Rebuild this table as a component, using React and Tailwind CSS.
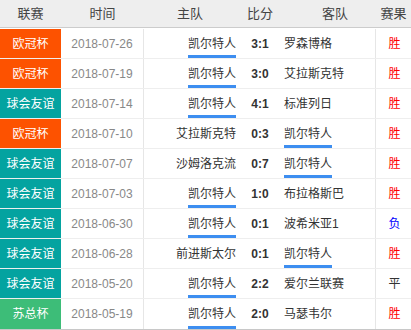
import React from 'react';

const leagueColors = {
  '欧冠杯': 'bg-[#fd5200]',
  '球会友谊': 'bg-[#04a3a0]',
  '苏总杯': 'bg-[#3dbd78]',
};

const resultColors = {
  '胜': 'text-[#ff0000]',
  '负': 'text-[#0000ff]',
  '平': 'text-[#333333]',
};

const matches = [
  { league: '欧冠杯', date: '2018-07-26', home: '凯尔特人', score: '3:1', away: '罗森博格', result: '胜' },
  { league: '欧冠杯', date: '2018-07-19', home: '凯尔特人', score: '3:0', away: '艾拉斯克特', result: '胜' },
  { league: '球会友谊', date: '2018-07-14', home: '凯尔特人', score: '4:1', away: '标准列日', result: '胜' },
  { league: '欧冠杯', date: '2018-07-10', home: '艾拉斯克特', score: '0:3', away: '凯尔特人', result: '胜' },
  { league: '球会友谊', date: '2018-07-07', home: '沙姆洛克流', score: '0:7', away: '凯尔特人', result: '胜' },
  { league: '球会友谊', date: '2018-07-03', home: '凯尔特人', score: '1:0', away: '布拉格斯巴', result: '胜' },
  { league: '球会友谊', date: '2018-06-30', home: '凯尔特人', score: '0:1', away: '波希米亚1', result: '负' },
  { league: '球会友谊', date: '2018-06-28', home: '前进斯太尔', score: '0:1', away: '凯尔特人', result: '胜' },
  { league: '球会友谊', date: '2018-05-20', home: '凯尔特人', score: '2:2', away: '爱尔兰联赛', result: '平' },
  { league: '苏总杯', date: '2018-05-19', home: '凯尔特人', score: '2:0', away: '马瑟韦尔', result: '胜' },
];

const cols = 'grid grid-cols-[61px_83px_92px_48px_92px_35px]';

function Team({ name }) {
  const ours = name === '凯尔特人';
  return (
    <span className="relative self-stretch flex items-center">
      {name}
      {ours && <span className="absolute left-0 right-0 bottom-0 h-[3px] bg-[#3d8ef0]" />}
    </span>
  );
}

export default function App() {
  return (
    <div
      className="w-[411px] bg-white text-[12px] text-[#333]"
      style={{ fontFamily: '"Liberation Sans", "Noto Sans CJK SC", sans-serif' }}
    >
      <div className={`${cols} h-[28px] bg-[#eeeeee] border-b border-[#cccccc] text-[13px] text-[#444] items-center`}>
        <div className="text-center">联赛</div>
        <div className="text-center">时间</div>
        <div className="text-center">主队</div>
        <div className="text-center">比分</div>
        <div className="text-center pl-[10px]">客队</div>
        <div className="text-center">赛果</div>
      </div>
      <div className="pt-[1px] border-b border-[#c8c8c8]">
        {matches.map((m, i) => (
          <div key={i} className={`${cols} h-[30px] border-b border-[#eeeeee] last:border-b-0`}>
            <div className={`${leagueColors[m.league]} text-white flex items-center justify-center`}>{m.league}</div>
            <div className="flex items-center justify-center text-[#888] border-r border-[#e6e6e6]">{m.date}</div>
            <div className="flex justify-end items-stretch">
              <Team name={m.home} />
            </div>
            <div className="flex items-center justify-center font-bold text-[#333]">{m.score}</div>
            <div className="flex justify-start items-stretch border-r border-[#e6e6e6]">
              <Team name={m.away} />
            </div>
            <div className={`flex items-center justify-center pl-[2px] ${resultColors[m.result]}`}>{m.result}</div>
          </div>
        ))}
      </div>
    </div>
  );
}
